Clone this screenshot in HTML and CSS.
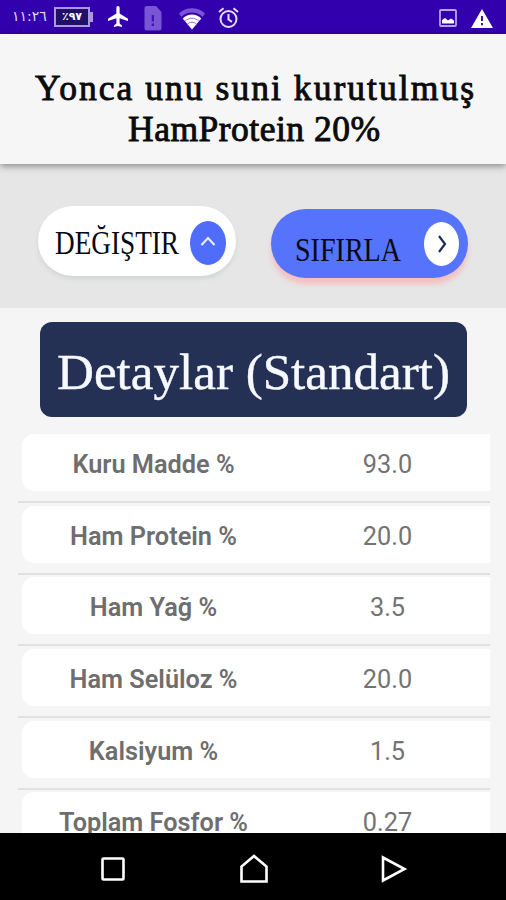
FILE: index.html
```html
<!DOCTYPE html>
<html lang="tr">
<head>
<meta charset="utf-8">
<title>Yonca unu</title>
<link rel="stylesheet" href="styles.css">
</head>
<body>
<div class="screen">
  <header class="status">
    <span class="clock">١١:٢٦</span>
    <span class="battery"><span class="level">٪٩٧</span></span>
    <svg class="plane" width="22" height="22" viewBox="0 0 22 22"><path fill="#fff" d="M11 0c1 0 1.600.8 1.600 2v5.400l8.400 5.300v2.200l-8.400-2.600v5.200l2.400 1.900V21L11 20l-4 1v-1.600l2.400-1.900v-5.200L1 14.900v-2.200l8.400-5.300V2C9.400.8 10 0 11 0z"/></svg>
    <svg class="sim" width="18" height="25" viewBox="0 0 18 25"><path fill="#7954d5" d="M2.500 0H12l5.500 6v16.500a2 2 0 0 1-2 2h-13a2 2 0 0 1-2-2V2a2 2 0 0 1 2-2z"/><path fill="#4213b5" d="M7.700 9h2.300v6.500H7.700zM7.700 17.500h2.300V20H7.700z"/></svg>
    <svg class="wifi" width="26" height="22" viewBox="0 0 28 22" preserveAspectRatio="none"><path fill="#7954d5" d="M0 5.500C7-1.500 21-1.500 28 5.500l-2.500 3.200C19 3 9 3 2.500 8.700z"/><path fill="#fff" d="M4 10.500C9.500 5.300 18.500 5.300 24 10.500L14 21.500z"/><path fill="none" stroke="#8c6ddd" stroke-width="1" d="M6.500 13.200c4.500-4 10.500-4 15 0M9 16.200c3-2.500 7-2.500 10 0"/></svg>
    <svg class="alarm" width="21" height="22" viewBox="0 0 21 22"><g fill="none" stroke="#e4ddf7" stroke-width="2"><circle cx="10.500" cy="12" r="8"/><path d="M10.500 7v5.500l3.500 2.300M1 5l4.500-3.800M20 5l-4.500-3.800"/></g></svg>
    <svg class="photo" width="18" height="18" viewBox="0 0 18 18"><rect x="1" y="1" width="16" height="16" rx="1" fill="none" stroke="#b9a4ea" stroke-width="1.800"/><path fill="#fff" d="M3 14.500V11l3-2 3 2.500 3-2 3 2v3z"/></svg>
    <svg class="warn" width="22" height="19" viewBox="0 0 22 19"><path fill="#fff" d="M11 0l11 19H0z"/><path fill="#3b10ad" d="M10 7h2v5h-2zM10 14h2v2.300h-2z"/></svg>
  </header>
  <h1 class="title">
    <svg width="506" height="129" viewBox="0 35 506 129"><g class="title-text"><text x="35" y="99.500" textLength="439" lengthAdjust="spacing">Yonca unu suni kurutulmuş</text><text x="128" y="140.500" textLength="252" lengthAdjust="spacing">HamProtein 20%</text></g></svg>
  </h1>
  <section class="actions">
    <button class="pill change">
      <svg class="label" width="124" height="56"><text x="0" y="40.500" textLength="124" lengthAdjust="spacingAndGlyphs">DEĞIŞTIR</text></svg>
      <span class="dot"><svg width="16" height="12" viewBox="0 0 16 12"><path d="M1.500 10L8 3l6.500 7" fill="none" stroke="#e9ecff" stroke-width="2.200"/></svg></span>
    </button>
    <button class="pill reset">
      <svg class="label" width="106" height="56"><text x="0" y="45" textLength="106" lengthAdjust="spacingAndGlyphs">SIFIRLA</text></svg>
      <span class="dot"><svg width="12" height="18" viewBox="0 0 12 18"><path d="M3 1l6 8-6 8" fill="none" stroke="#1e2c58" stroke-width="2.200"/></svg></span>
    </button>
  </section>
  <main class="content">
    <h2 class="banner"><svg width="427" height="95"><text x="17" y="67" textLength="393" lengthAdjust="spacingAndGlyphs">Detaylar (Standart)</text></svg></h2>
    <div class="rows">
      <div class="row"><b>Kuru Madde %</b><span>93.0</span></div>
      <div class="row"><b>Ham Protein %</b><span>20.0</span></div>
      <div class="row"><b>Ham Yağ %</b><span>3.5</span></div>
      <div class="row"><b>Ham Selüloz %</b><span>20.0</span></div>
      <div class="row"><b>Kalsiyum %</b><span>1.5</span></div>
      <div class="row"><b>Toplam Fosfor %</b><span>0.27</span></div>
    </div>
  </main>
  <nav class="nav">
    <svg width="26" height="26" viewBox="0 0 26 26"><rect x="2.500" y="2.500" width="21" height="21" rx="1"/></svg>
    <svg width="30" height="30" viewBox="0 0 30 30"><path d="M2.500 27.500V12.500L15 2l12.500 10.500v15z"/></svg>
    <svg width="26" height="28" viewBox="0 0 26 28"><path d="M2 2.500v23L23.500 14z"/></svg>
  </nav>
</div>
</body>
</html>
```
FILE: styles.css
```css
* { box-sizing: border-box; }
body { margin: 0; }
.screen {
  width: 506px;
  height: 900px;
  display: flex;
  flex-direction: column;
  overflow: hidden;
  background: #f5f5f5;
  font-family: Roboto, sans-serif;
}
svg { display: block; flex: none; overflow: visible; }
.status {
  flex: none;
  height: 34px;
  padding-left: 12px;
  display: flex;
  align-items: center;
  background: #3300ae;
  color: #e2daf6;
}
.clock {
  width: 34px;
  font: 14px/20px "DejaVu Sans", sans-serif;
  direction: ltr;
  unicode-bidi: bidi-override;
  margin-top: -2px;
  white-space: nowrap;
}
.battery {
  position: relative;
  width: 36px;
  height: 20px;
  margin-left: 8px;
  border: 2px solid #ad98df;
  background: #21106a;
  display: flex;
  align-items: center;
  justify-content: center;
}
.battery::after {
  content: "";
  position: absolute;
  right: -5px;
  top: 3px;
  width: 3px;
  height: 10px;
  background: #ad98df;
}
.level {
  font: bold 11px/16px "DejaVu Sans", sans-serif;
  color: #fff;
  direction: ltr;
  unicode-bidi: bidi-override;
}
.plane { margin-left: 17px; }
.sim { margin-left: 15px; margin-top: 3px; }
.wifi { margin-left: 17px; margin-top: 3px; }
.alarm { margin-left: 13px; margin-top: 1px; }
.photo { margin-left: 200px; margin-top: 1px; }
.warn { margin-left: 14px; margin-top: 2px; }
.title {
  flex: none;
  position: relative;
  height: 130px;
  margin: 0;
  padding-top: 1px;
  background: #f6f6f6;
  box-shadow: 0 2px 7px rgba(0, 0, 0, .42);
}
text { font-family: "Liberation Serif", serif; }
.title-text text {
  font-size: 35.5px;
  font-weight: 400;
  fill: #0b0b0b;
  stroke: #0b0b0b;
  stroke-width: .9px;
}
.actions {
  flex: none;
  height: 144px;
  padding: 42px 38px 0 38px;
  display: flex;
  justify-content: space-between;
  background: #e6e6e6;
}
.pill {
  height: 70px;
  width: 198px;
  padding: 0 10px 0 17px;
  border: 0;
  border-radius: 35px;
  display: flex;
  align-items: center;
  justify-content: space-between;
}
.label text {
  font-size: 34px;
  fill: #050914;
}
.change {
  background: #fff;
  box-shadow: 0 3px 4px rgba(150, 170, 165, .25);
}
.reset {
  height: 69px;
  width: 197px;
  margin-top: 3px;
  padding: 0 9px 0 24px;
  background: #5673fb;
  box-shadow: 0 6px 5px rgba(255, 160, 160, .55);
}
.dot {
  width: 36px;
  height: 44px;
  border-radius: 50%;
  display: flex;
  align-items: center;
  justify-content: center;
  background: #4f6dfa;
  margin-top: 3px;
}
.change .dot svg { margin-top: -3px; }
.reset .dot {
  width: 35px;
  background: #fff;
  margin-top: 0;
}
.content {
  flex: 1;
  min-height: 0;
  overflow: hidden;
  padding-top: 14px;
}
.banner {
  width: 427px;
  height: 95px;
  margin: 0 0 17px 40px;
  border-radius: 12px;
  background: #243155;
}
.banner text {
  font-size: 50px;
  font-weight: 400;
  fill: #f6f9ff;
  stroke: #f6f9ff;
  stroke-width: .4px;
}
.rows {
  width: 473px;
  margin-left: 18px;
}
.row {
  height: 57px;
  padding-top: 4px;
  margin: 0 1px 14.7px 4px;
  position: relative;
  display: grid;
  grid-template-columns: 263px 205px;
  align-items: center;
  text-align: center;
  background: #fff;
  border-radius: 12px 0 0 12px;
  font-size: 25.3px;
  color: #737373;
}
.row b {
  font-weight: 600;
  color: #6e6e6e;
}
.row::after {
  content: "";
  position: absolute;
  left: -4px;
  right: 0;
  top: 67px;
  height: 2px;
  background: #e0e0e0;
}
.nav {
  flex: none;
  height: 67px;
  display: flex;
  align-items: center;
  padding: 4px 99px 0 100px;
  justify-content: space-between;
  background: #000;
}
.nav svg {
  fill: none;
  stroke: #fff;
  stroke-width: 2.6px;
}
```
